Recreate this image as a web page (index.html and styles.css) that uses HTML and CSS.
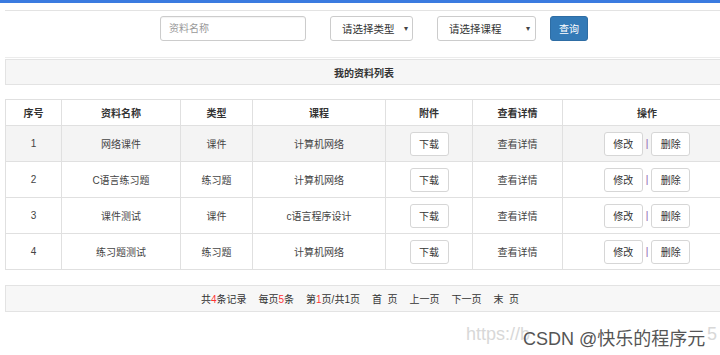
FILE: index.html
```html
<!DOCTYPE html>
<html lang="zh">
<head>
<meta charset="utf-8">
<title>我的资料列表</title>
<link rel="stylesheet" href="styles.css">
</head>
<body>
<div class="topbar"></div>
<div class="page">
  <form class="search">
    <input class="text-input" type="text" placeholder="资料名称">
    <div class="fake-select sel-type"><span>请选择类型</span><span class="caret">▾</span></div>
    <div class="fake-select sel-course"><span>请选择课程</span><span class="caret">▾</span></div>
    <button type="button" class="btn-primary">查询</button>
  </form>

  <div class="panel-title">我的资料列表</div>

  <table class="data">
    <colgroup>
      <col class="c1"><col class="c2"><col class="c3"><col class="c4"><col class="c5"><col class="c6"><col class="c7">
    </colgroup>
    <thead>
      <tr>
        <th>序号</th>
        <th>资料名称</th>
        <th>类型</th>
        <th>课程</th>
        <th>附件</th>
        <th>查看详情</th>
        <th>操作</th>
      </tr>
    </thead>
    <tbody>
      <tr class="hover">
        <td>1</td><td>网络课件</td><td>课件</td><td>计算机网络</td>
        <td><span class="btn">下载</span></td><td>查看详情</td>
        <td><span class="btn">修改</span><span class="sep">|</span><span class="btn">删除</span></td>
      </tr>
      <tr>
        <td>2</td><td>C语言练习题</td><td>练习题</td><td>计算机网络</td>
        <td><span class="btn">下载</span></td><td>查看详情</td>
        <td><span class="btn">修改</span><span class="sep">|</span><span class="btn">删除</span></td>
      </tr>
      <tr>
        <td>3</td><td>课件测试</td><td>课件</td><td>c语言程序设计</td>
        <td><span class="btn">下载</span></td><td>查看详情</td>
        <td><span class="btn">修改</span><span class="sep">|</span><span class="btn">删除</span></td>
      </tr>
      <tr>
        <td>4</td><td>练习题测试</td><td>练习题</td><td>计算机网络</td>
        <td><span class="btn">下载</span></td><td>查看详情</td>
        <td><span class="btn">修改</span><span class="sep">|</span><span class="btn">删除</span></td>
      </tr>
    </tbody>
  </table>

  <div class="pager">
    <span>共<em>4</em>条记录</span>
    <span>每页<em>5</em>条</span>
    <span>第<em>1</em>页/共1页</span>
    <span>首&nbsp;&nbsp;页</span>
    <span>上一页</span>
    <span>下一页</span>
    <span>末&nbsp;&nbsp;页</span>
  </div>
</div>
<div class="watermark">
  <span class="wm-url">https://b</span>
  <span class="wm-name">CSDN @快乐的程序元</span>
  <span class="wm-tail">5</span>
</div>
</body>
</html>
```
FILE: styles.css
```css
html, body {
  margin: 0;
  padding: 0;
  overflow: hidden;
  background: #fff;
}
body {
  font-family: "Liberation Sans", "Noto Sans CJK SC", sans-serif;
  font-size: 10px;
  color: #333;
  width: 720px;
  height: 355px;
  position: relative;
}
.topbar {
  height: 3px;
  background: #3b7be0;
}
.page {
  padding: 7px 0 0 5px;
}
.search {
  margin: 0;
  width: 740px;
  height: 48px;
  border-top: 1px solid #e3e3e3;
  border-bottom: 1px solid #ececec;
  display: flex;
  align-items: flex-start;
  padding: 5px 0 0 155px;
  box-sizing: border-box;
}
.text-input {
  width: 146px;
  height: 25px;
  box-sizing: border-box;
  border: 1px solid #ccc;
  border-radius: 3px;
  padding: 0 8px;
  font-family: inherit;
  font-size: 10px;
  color: #333;
  outline: none;
  box-shadow: inset 0 1px 1px rgba(0,0,0,0.05);
}
.text-input::placeholder {
  color: #999;
}
.fake-select {
  height: 25px;
  box-sizing: border-box;
  border: 1px solid #ccc;
  border-radius: 3px;
  display: flex;
  align-items: center;
  justify-content: space-between;
  font-size: 10.5px;
  color: #333;
  background: #fff;
}
.sel-type {
  width: 83px;
  margin-left: 24px;
  padding: 0 4px 0 11px;
}
.sel-course {
  width: 99px;
  margin-left: 24px;
  padding: 0 5px 0 11px;
}
.caret {
  font-size: 8px;
  color: #444;
}
.btn-primary {
  margin-left: 14px;
  width: 38px;
  height: 25px;
  border: 1px solid #2e6da4;
  border-radius: 3px;
  background: #337ab7;
  color: #fff;
  font-family: inherit;
  font-size: 10px;
  padding: 0;
}
.panel-title {
  margin-top: 1px;
  width: 740px;
  height: 26px;
  box-sizing: border-box;
  border: 1px solid #e3e3e3;
  background: #f6f6f6;
  display: flex;
  align-items: center;
  justify-content: center;
  padding-right: 22px;
  font-weight: bold;
  color: #333;
}
.data {
  margin-top: 14px;
  border-collapse: collapse;
  table-layout: fixed;
  width: 727px;
}
.data th, .data td {
  border: 1px solid #e0e0e0;
  text-align: center;
  padding: 0;
}
.data th {
  height: 25px;
  font-weight: bold;
  color: #333;
}
.data td {
  height: 35px;
  color: #444;
}
.data tr.hover td {
  background: #f4f4f4;
}
.c1 { width: 56px; }
.c2 { width: 119px; }
.c3 { width: 72px; }
.c4 { width: 133px; }
.c5 { width: 87px; }
.c6 { width: 90px; }
.btn {
  display: inline-flex;
  align-items: center;
  justify-content: center;
  width: 39px;
  height: 24px;
  box-sizing: border-box;
  border: 1px solid #d6d6d6;
  border-radius: 3px;
  background: #fff;
  color: #333;
  vertical-align: middle;
}
.sep {
  display: inline-block;
  margin: 0 3px 0 3px;
  color: #8e58b0;
  vertical-align: middle;
}
.pager {
  margin-top: 15px;
  width: 740px;
  height: 27px;
  box-sizing: border-box;
  border: 1px solid #e3e3e3;
  background: #f7f7f7;
  display: flex;
  align-items: center;
  justify-content: center;
  gap: 12px;
  padding-right: 30px;
  color: #333;
}
.pager em {
  font-style: normal;
  color: #f33;
}
.watermark {
  position: absolute;
  left: 466px;
  top: 324px;
  width: 254px;
  height: 24px;
}
.wm-url {
  position: absolute;
  left: 0;
  top: 0;
  font-size: 18px;
  color: #d8d8d8;
  white-space: nowrap;
}
.wm-tail {
  position: absolute;
  left: 241px;
  top: 0;
  font-size: 18px;
  color: #d8d8d8;
}
.wm-name {
  position: absolute;
  left: 57px;
  top: 0;
  font-size: 18px;
  color: #555;
  white-space: nowrap;
  text-shadow: 0 0 2px #fff;
}
```
